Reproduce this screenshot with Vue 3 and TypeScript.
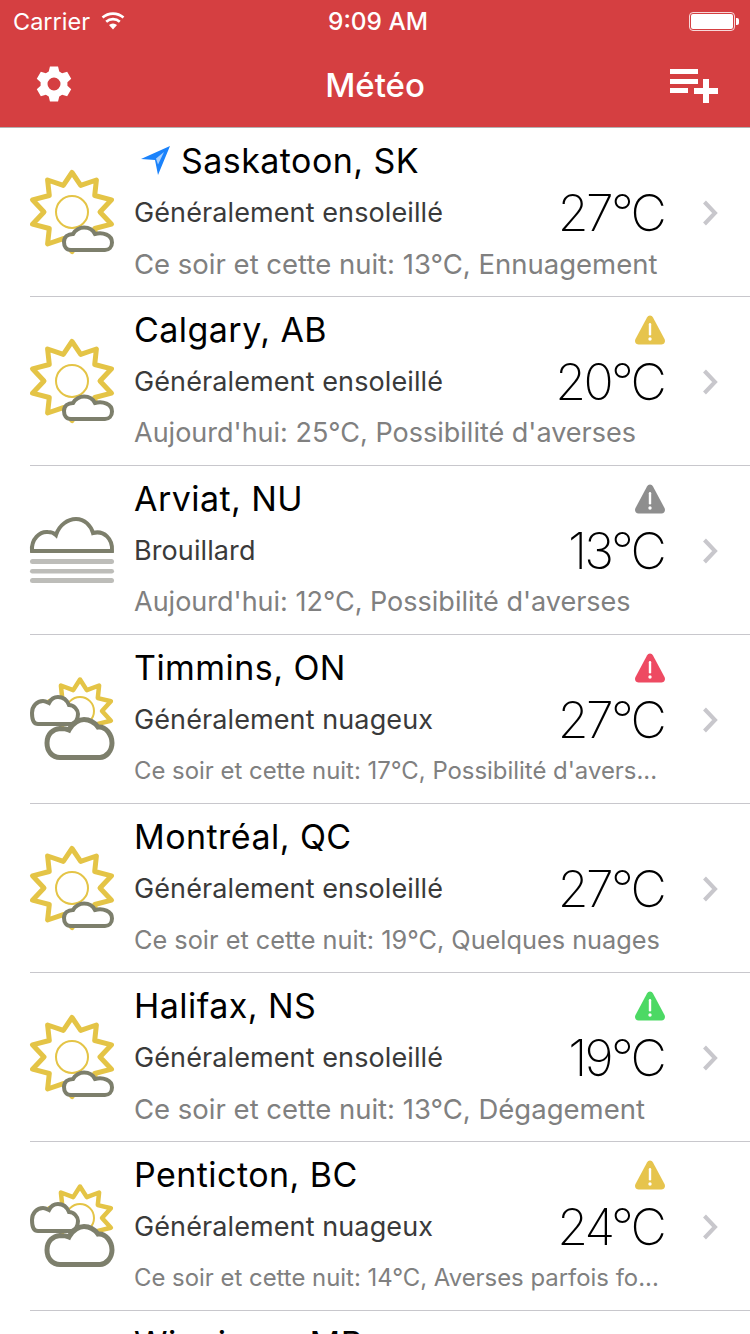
<script setup lang="ts">
type Kind = 'sun' | 'fog' | 'cloudy'

interface City {
  name: string
  located?: boolean
  alert?: string
  kind: Kind
  condition: string
  temp: string
  forecast: string
  fit: number
}

const cities: City[] = [
  { name: 'Saskatoon, SK', located: true, kind: 'sun', condition: 'Généralement ensoleillé', temp: '27°C', forecast: 'Ce soir et cette nuit: 13°C, Ennuagement', fit: 27.5 },
  { name: 'Calgary, AB', alert: '#e6c44d', kind: 'sun', condition: 'Généralement ensoleillé', temp: '20°C', forecast: "Aujourd'hui: 25°C, Possibilité d'averses", fit: 27 },
  { name: 'Arviat, NU', alert: '#8e8e8e', kind: 'fog', condition: 'Brouillard', temp: '13°C', forecast: "Aujourd'hui: 12°C, Possibilité d'averses", fit: 27 },
  { name: 'Timmins, ON', alert: '#ee4a62', kind: 'cloudy', condition: 'Généralement nuageux', temp: '27°C', forecast: "Ce soir et cette nuit: 17°C, Possibilité d'avers...", fit: 23.9 },
  { name: 'Montréal, QC', kind: 'sun', condition: 'Généralement ensoleillé', temp: '27°C', forecast: 'Ce soir et cette nuit: 19°C, Quelques nuages', fit: 25.3 },
  { name: 'Halifax, NS', alert: '#4cd964', kind: 'sun', condition: 'Généralement ensoleillé', temp: '19°C', forecast: 'Ce soir et cette nuit: 13°C, Dégagement', fit: 27.5 },
  { name: 'Penticton, BC', alert: '#e6c44d', kind: 'cloudy', condition: 'Généralement nuageux', temp: '24°C', forecast: 'Ce soir et cette nuit: 14°C, Averses parfois fo...', fit: 23.9 },
  { name: 'Winnipeg, MB', kind: 'sun', condition: 'Généralement ensoleillé', temp: '27°C', forecast: 'Ce soir et cette nuit: 15°C, Dégagement', fit: 27.5 },
]

// spiky sun outline, 10 points
const star = (cx: number, cy: number, rx: number, ry: number, inner: number) => {
  const pts: string[] = []
  for (let i = 0; i < 20; i++) {
    const a = (-90 + i * 18) * (Math.PI / 180)
    const x = i % 2 === 0 ? rx : inner
    const y = i % 2 === 0 ? ry : inner
    pts.push(`${(cx + x * Math.cos(a)).toFixed(1)},${(cy + y * Math.sin(a)).toFixed(1)}`)
  }
  return pts.join(' ')
}

const gearPath = () => {
  const at = (deg: number, r: number) => {
    const a = deg * (Math.PI / 180)
    return `${(18 + r * Math.cos(a)).toFixed(2)} ${(18 + r * Math.sin(a)).toFixed(2)}`
  }
  let d = ''
  for (let i = 0; i < 6; i++) {
    const c = -90 + i * 60
    d += `${i ? 'L' : 'M'}${at(c - 23, 13.5)}L${at(c - 13, 18)}L${at(c + 13, 18)}L${at(c + 23, 13.5)}`
  }
  return `${d}ZM18 11.5a6.500 6.500 0 1 0 0 13a6.500 6.500 0 1 0 0-13Z`
}

const sunStar = star(42, 42, 41.5, 39.5, 28)
const cloudySun = star(50, 34, 32.5, 31.5, 22)
const gear = gearPath()
</script>

<template>
  <div class="screen">
    <header class="header">
      <div class="status">
        <div class="status-left">
          <span>Carrier</span>
          <svg class="wifi" width="26" height="18" viewBox="0 0 26 18">
            <path d="M13 17.500 9 13a6 6 0 0 1 8 0z" fill="#fff" />
            <path d="M6.200 9.800a10 10 0 0 1 13.600 0M2.500 5.600a16 16 0 0 1 21 0" fill="none" stroke="#fff" stroke-width="2.600" />
          </svg>
        </div>
        <span class="clock">9:09 AM</span>
        <div class="battery">
          <div class="battery-body"><div class="battery-fill" /></div>
          <div class="battery-tip" />
        </div>
      </div>
      <div class="navbar">
        <svg class="gear" width="36" height="36" viewBox="0 0 36 36">
          <path fill="#fff" fill-rule="evenodd" :d="gear" />
        </svg>
        <h1 class="title">Météo</h1>
        <svg class="add" width="48" height="34" viewBox="0 0 48 34">
          <path fill="#fff" d="M0 0h28v5H0zM0 10h28v5H0zM0 19h18v5H0zM33 10h6v9h9v6h-9v9h-6v-9h-9v-6h9z" />
        </svg>
      </div>
    </header>

    <ul class="list">
      <li v-for="city in cities" :key="city.name" class="row">
        <svg class="icon" width="84" height="84" viewBox="0 0 84 84">
          <template v-if="city.kind === 'sun'">
            <polygon :points="sunStar" fill="#fff" stroke="#e4c446" stroke-width="5" stroke-linejoin="round" />
            <circle cx="42" cy="42" r="16" fill="#fff" stroke="#e4c446" stroke-width="2" />
            <path d="M41 80C36 80 34 76 34 72C34 67 38 64 43 64C45 60 50 57.500 54 57.500C59 57.500 63 60 65 64C73 62 82 65 82 72.500C82 77 79 80 75 80Z" fill="#fff" stroke="#7d7f6c" stroke-width="4" />
          </template>
          <template v-else-if="city.kind === 'fog'">
            <path d="M2 43C1 31 10 23 18 24C21 24 24 25 26 27C29 17 38 11 46 11C55 11 61 18 63 25C74 22 83 31 82 43Z" fill="#fff" stroke="#7d7f6c" stroke-width="4" />
            <rect x="0" y="51" width="84" height="5" rx="2.500" fill="#bdbdb9" />
            <rect x="0" y="61" width="84" height="4.500" rx="2.200" fill="#bdbdb9" />
            <rect x="0" y="70" width="84" height="5" rx="2.500" fill="#bdbdb9" />
          </template>
          <template v-else>
            <polygon :points="cloudySun" fill="#fff" stroke="#e4c446" stroke-width="4.500" stroke-linejoin="round" />
            <circle cx="50" cy="34" r="14" fill="#fff" stroke="#e4c446" stroke-width="2" />
            <path d="M8 47C3 47 2 41 2 36C2 29 7 24 13 24C15 24 17 25 19 26C21 22 25 20 28 20C33 20 37 23 39 28C44 28 48 33 48 37C48 43 45 47 41 47Z" fill="#fff" stroke="#7d7f6c" stroke-width="4" />
            <path d="M30 80.500C22 80.500 17 74 17 66C17 57 23 52 30 51.500C34 51.500 37 52 39 53C43 45 50 42.500 54 42.500C60 42.500 65 46 68 50C76 49 82 58 82 66C82 74 76 80.500 70 80.500Z" fill="#fff" stroke="#7d7f6c" stroke-width="5" />
          </template>
        </svg>
        <div class="body">
          <div class="line name-line">
            <svg v-if="city.located" class="arrow" width="30" height="30" viewBox="0 0 30 30">
              <path d="M29 0 0 13l14 1 3 15z" fill="#1a82fb" />
              <path d="M23 6 15 12.500l2 6z" fill="#a9d0fd" />
            </svg>
            <span class="name">{{ city.name }}</span>
            <svg v-if="city.alert" class="alert" width="32" height="30" viewBox="0 0 32 30">
              <path d="M16 .500c1.300 0 2.300.7 3 2l11.500 21.500c1.300 2.500-.2 5.500-3 5.500h-23c-2.800 0-4.300-3-3-5.500L13 2.500c.7-1.300 1.700-2 3-2z" :fill="city.alert" />
              <rect x="14.800" y="8" width="2.400" height="12.500" rx="1.200" fill="#fff" />
              <circle cx="16" cy="24" r="1.700" fill="#fff" />
            </svg>
          </div>
          <div class="line mid-line">
            <span class="condition">{{ city.condition }}</span>
            <span class="temp">{{ city.temp }}</span>
          </div>
          <div class="forecast" :style="{ fontSize: city.fit + 'px' }">{{ city.forecast }}</div>
        </div>
        <svg class="chevron" width="16" height="28" viewBox="0 0 16 28">
          <path d="M2.500 3 13 14 2.500 25" fill="none" stroke="#c8c7cc" stroke-width="4" />
        </svg>
      </li>
    </ul>
  </div>
</template>

<style scoped>
.screen {
  width: 750px;
  height: 1334px;
  overflow: hidden;
  background: #fff;
  font-family: Inter, "Liberation Sans", sans-serif;
}

.header {
  height: 128px;
  box-sizing: border-box;
  background: #d53f41;
  color: #fff;
  border-bottom: 1px solid #b2b2b2;
}

.status {
  height: 40px;
  box-sizing: border-box;
  padding: 2px 11px 0 13px;
  display: flex;
  align-items: center;
  justify-content: space-between;
  font-size: 23.500px;
  position: relative;
}

.status-left {
  display: flex;
  align-items: center;
  gap: 10px;
}

.clock {
  position: absolute;
  left: 0;
  right: 0;
  text-align: center;
  font-size: 24.400px;
  font-weight: 500;
  padding-left: 6px;
}

.battery {
  display: flex;
  align-items: center;
  gap: 1px;
}

.battery-body {
  width: 42px;
  height: 15px;
  border: 1px solid rgba(255, 255, 255, 0.8);
  border-radius: 4px;
  padding: 1px;
  display: flex;
}

.battery-fill {
  flex: 1;
  background: #fff;
  border-radius: 2px;
}

.battery-tip {
  width: 3px;
  height: 7px;
  background: #fff;
  border-radius: 0 2px 2px 0;
}

.navbar {
  height: 87px;
  display: grid;
  grid-template-columns: 1fr auto 1fr;
  align-items: center;
  padding: 0 32px;
}

.gear {
  margin-left: 4px;
}

.add {
  justify-self: end;
  margin-top: 5px;
}

.title {
  margin: 2px 0 0;
  font-size: 33px;
  font-weight: 500;
}

.list {
  list-style: none;
  margin: 0;
  padding: 0;
}

.row {
  height: 169px;
  box-sizing: border-box;
  margin-left: 30px;
  display: flex;
  align-items: center;
  border-bottom: 1px solid #c8c7cc;
}

.icon {
  flex: none;
  margin-right: 20px;
  overflow: visible;
}

.body {
  width: 532px;
  flex: none;
  display: flex;
  flex-direction: column;
  padding-bottom: 3px;
}

.line {
  display: flex;
  align-items: center;
  justify-content: space-between;
}

.name-line {
  height: 42px;
}

.arrow {
  flex: none;
  margin-left: 7px;
  margin-right: 10px;
}

.name {
  flex: 1;
  font-size: 34px;
  letter-spacing: 0.45px;
  color: #000;
}

.mid-line {
  height: 62px;
}

.condition {
  font-size: 27px;
  letter-spacing: 0.1px;
  color: #3a3a3a;
}

.temp {
  font-size: 50px;
  font-weight: 150;
  letter-spacing: -2.700px;
  margin-right: 2px;
  color: #000;
}

.forecast {
  margin-top: 4px;
  height: 34px;
  line-height: 32px;
  color: #808080;
  white-space: nowrap;
}

.chevron {
  flex: none;
  margin-left: 36px;
  margin-top: 2px;
}
</style>

<style>
html, body {
  margin: 0;
  background: #fff;
}
</style>
